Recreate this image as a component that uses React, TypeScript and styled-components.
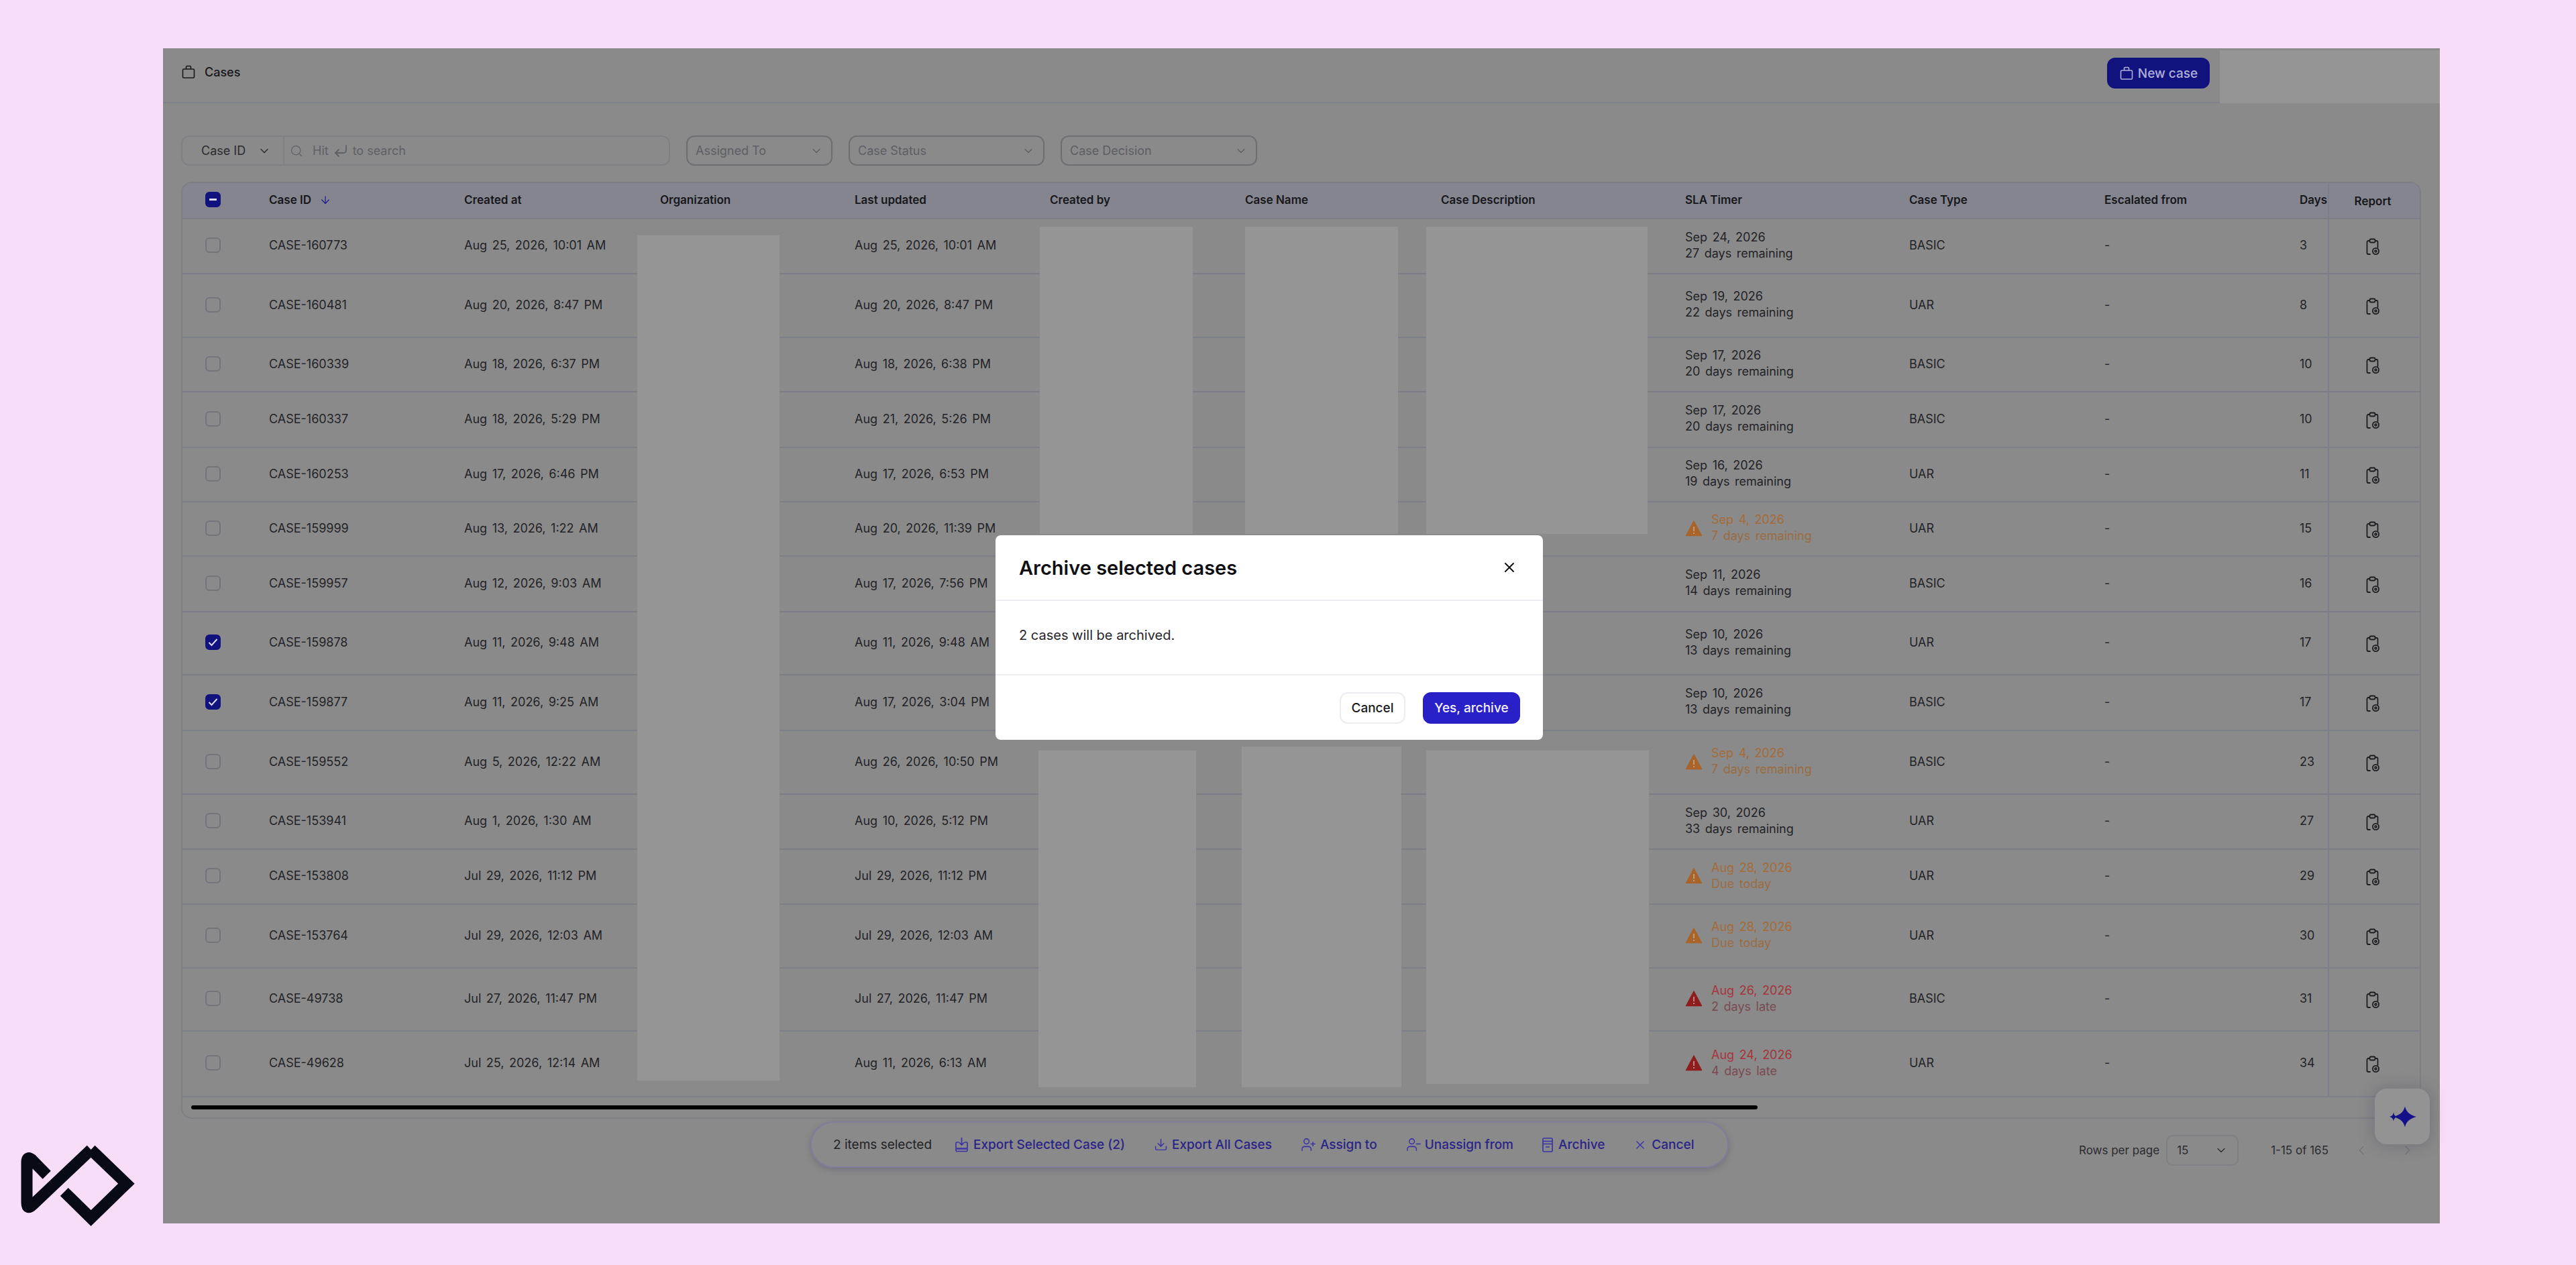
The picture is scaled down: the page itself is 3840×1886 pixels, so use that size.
import styled, { createGlobalStyle } from 'styled-components';
import {
	ArrowDown,
	ChevronDown,
	ChevronLeft,
	ChevronRight,
	CornerDownLeft,
	Download,
	Search,
	UserMinus,
	UserPlus,
	X,
} from 'lucide-react';

const GlobalStyle = createGlobalStyle`
	html, body {
		margin: 0;
		background: #f7ddf7;
	}
	* {
		box-sizing: border-box;
	}
	body {
		font-family: Inter, "Liberation Sans", sans-serif;
		color: #1c1c20;
	}
`;

const Page = styled.div`
	position: relative;
	width: 3840px;
	height: 1886px;
	padding: 72px 203px 62px 243px;
	overflow: hidden;
`;

const Logo = styled.svg`
	position: absolute;
	left: 20px;
	bottom: 51px;
	width: 190px;
	height: 140px;
`;

const Panel = styled.main`
	position: relative;
	width: 100%;
	height: 100%;
	background: #8a8a8a;
	display: flex;
	flex-direction: column;
`;

const TopBar = styled.header`
	height: 82px;
	padding: 14px 343px 0 27px;
	border-bottom: 2px solid #7f8189;
	display: flex;
	justify-content: space-between;
	align-items: flex-start;
`;

const PageTitle = styled.div`
	display: flex;
	align-items: center;
	gap: 13px;
	height: 42px;
	font-size: 18px;
	font-weight: 500;
	color: #17171a;
`;

const NewCaseButton = styled.button`
	width: 153px;
	height: 46px;
	border: 0;
	border-radius: 12px;
	background: #12127f;
	color: #aeaed8;
	font: 500 19px Inter, sans-serif;
	display: flex;
	align-items: center;
	justify-content: center;
	gap: 6px;
`;

const Filters = styled.div`
	display: flex;
	gap: 24px;
	height: 45px;
	margin: 48px 0 24px 27px;
`;

const SearchGroup = styled.div`
	width: 729px;
	border: 2px solid #7f8084;
	border-radius: 12px;
	display: flex;
	align-items: center;
`;

const FieldSelect = styled.div`
	width: 152px;
	height: 100%;
	padding: 0 18px 0 28px;
	border-right: 2px solid #7f8084;
	display: flex;
	align-items: center;
	justify-content: space-between;
	font-size: 18px;
	color: #2a2a2e;
`;

const SearchHint = styled.div`
	display: flex;
	align-items: center;
	gap: 6px;
	padding-left: 8px;
	font-size: 18px;
	color: #5f6066;

	svg:first-child {
		margin-right: 8px;
	}
`;

const FilterSelect = styled.div<{ $w: number }>`
	width: ${(p) => p.$w}px;
	padding: 0 12px;
	border: 2px solid #6e6f73;
	border-radius: 12px;
	display: flex;
	align-items: center;
	justify-content: space-between;
	font-size: 18px;
	color: #5d5e64;
`;

const Table = styled.section`
	position: relative;
	width: 3339px;
	height: 1397px;
	margin-left: 27px;
	border: 2px solid #7e7f85;
	border-radius: 16px;
	overflow: hidden;
`;

const Row = styled.div<{ $h: number; $head?: boolean }>`
	display: grid;
	grid-template-columns: 129px 291px 292px 290px 291px 291px 292px 364px 334px 291px 291px 42px 137px;
	height: ${(p) => p.$h}px;
	padding-bottom: 3px;
	align-items: center;
	border-bottom: 2px solid #7d7f88;
	background: ${(p) => (p.$head ? '#84858f' : 'transparent')};
	font-size: ${(p) => (p.$head ? 17 : 18)}px;
	font-weight: ${(p) => (p.$head ? 600 : 400)};
	word-spacing: ${(p) => (p.$head ? 0 : 2.5)}px;
	color: ${(p) => (p.$head ? '#17171b' : '#232327')};
`;

const CheckCell = styled.div`
	display: flex;
	padding-left: 34px;
`;

const CheckBox = styled.span<{ $on?: boolean }>`
	width: 23px;
	height: 23px;
	border-radius: 6px;
	border: 2px solid ${(p) => (p.$on ? '#12127f' : '#73747c')};
	background: ${(p) => (p.$on ? '#12127f' : 'transparent')};
	display: flex;
	align-items: center;
	justify-content: center;
	color: #d8d8ee;
`;

const SortLabel = styled.div`
	display: flex;
	align-items: center;
	gap: 12px;
	color: #17171b;
	svg {
		color: #1d1a8f;
	}
`;

const SlaCell = styled.div`
	display: flex;
	align-items: center;
	gap: 13px;
	line-height: 24px;
`;

const SlaDate = styled.div<{ $tone?: 'warn' | 'late' }>`
	color: ${(p) => (p.$tone === 'warn' ? '#a56c38' : p.$tone === 'late' ? '#a5353a' : '#232327')};
`;

const SlaNote = styled.div<{ $tone?: 'warn' | 'late' }>`
	color: ${(p) => (p.$tone === 'warn' ? '#9a6c42' : p.$tone === 'late' ? '#7a4a50' : '#232327')};
`;

const ReportCell = styled.div`
	align-self: stretch;
	padding-right: 5px;
	border-left: 2px solid #7d7f88;
	display: flex;
	align-items: center;
	justify-content: center;
	margin-bottom: -5px;
`;

const ScrollArea = styled.div`
	height: 32px;
	padding: 12px 0 0 13px;
`;

const ScrollThumb = styled.div`
	width: 2335px;
	height: 6px;
	border-radius: 3px;
	background: #000;
`;

const Redaction = styled.div<{ $x: number; $y: number; $w: number; $h: number }>`
	position: absolute;
	left: ${(p) => p.$x}px;
	top: ${(p) => p.$y}px;
	width: ${(p) => p.$w}px;
	height: ${(p) => p.$h}px;
	background: #959595;
`;

const Footer = styled.footer`
	flex: 1;
	display: flex;
	align-items: flex-start;
	padding: 4px 37px 0 965px;
`;

const ActionBar = styled.div`
	width: 1369px;
	height: 69px;
	padding: 0 32px;
	border: 2px solid #7f7c9c;
	border-radius: 35px;
	box-shadow: 0 3px 8px rgba(60, 60, 90, 0.3);
	display: flex;
	align-items: center;
	gap: 43px;
	font-size: 19px;
	font-weight: 500;
`;

const SelectedCount = styled.span`
	margin-right: -9px;
	color: #232327;
	font-weight: 400;
`;

const ActionLink = styled.span<{ $gap?: number }>`
	display: flex;
	align-items: center;
	gap: ${(p) => p.$gap ?? 7}px;
	color: #2a2488;

	svg {
		color: #3a33a8;
	}
`;

const Pagination = styled.div`
	margin: 20px 0 0 auto;
	display: flex;
	align-items: center;
	font-size: 17px;
	color: #2b2b2f;
`;

const RowsSelect = styled.div`
	width: 108px;
	height: 46px;
	margin: 0 48px 0 10px;
	padding: 0 14px;
	border: 2px solid #7f8084;
	border-radius: 10px;
	display: flex;
	align-items: center;
	justify-content: space-between;
`;

const PageArrows = styled.div`
	display: flex;
	gap: 47px;
	margin-left: 38px;
	color: #74757a;
`;

const AssistantButton = styled.button`
	position: absolute;
	right: 15px;
	bottom: 118px;
	width: 82px;
	height: 83px;
	padding: 0;
	border: 0;
	border-radius: 18px;
	background: #939393;
	box-shadow: 0 0 24px rgba(60, 60, 90, 0.32);
	display: flex;
	align-items: center;
	justify-content: center;
`;

const Modal = styled.div`
	position: absolute;
	left: 1241px;
	top: 726px;
	width: 816px;
	height: 305px;
	border-radius: 8px;
	background: #fff;
	display: flex;
	flex-direction: column;
`;

const ModalHead = styled.div`
	height: 98px;
	padding: 0 38px 0 35px;
	border-bottom: 2px solid #ececf3;
	display: flex;
	align-items: center;
	justify-content: space-between;
	font-size: 29px;
	font-weight: 600;
	color: #101014;
`;

const ModalBody = styled.div`
	height: 111px;
	padding: 0 35px 8px;
	border-bottom: 2px solid #ececf3;
	display: flex;
	align-items: center;
	font-size: 20px;
	color: #26262a;
`;

const ModalFoot = styled.div`
	flex: 1;
	padding-right: 34px;
	display: flex;
	align-items: center;
	justify-content: flex-end;
	gap: 26px;
`;

const ModalButton = styled.button<{ $primary?: boolean }>`
	height: 47px;
	width: ${(p) => (p.$primary ? 145 : 98)}px;
	border-radius: 12px;
	border: 2px solid ${(p) => (p.$primary ? '#2a20c8' : '#ececf3')};
	background: ${(p) => (p.$primary ? '#2a20c8' : '#fff')};
	color: ${(p) => (p.$primary ? '#f2f2ff' : '#1a1a1e')};
	font: 500 19px Inter, sans-serif;
`;

const CaseIcon = () => (
	<svg width="22" height="22" viewBox="0 0 22 22" fill="none" stroke="currentColor" strokeWidth="1.6">
		<rect x="2.5" y="7" width="17" height="13" rx="1.5" />
		<path d="M7.5 7V4A1.5 1.5 0 0 1 9 2.5h4A1.5 1.5 0 0 1 14.5 4v3" />
	</svg>
);

const ReportIcon = () => (
	<svg width="26" height="26" viewBox="0 0 26 26" fill="none" stroke="#1d1d21" strokeWidth="1.8" strokeLinecap="round">
		<rect x="8.5" y="1.5" width="8" height="5" rx="1.5" />
		<path d="M8 4H6.5A2 2 0 0 0 4.5 6v16a2 2 0 0 0 2 2H9" />
		<path d="M17 4h1.5a2 2 0 0 1 2 2v8" />
		<circle cx="17.5" cy="19.5" r="4.6" />
		<circle cx="17.5" cy="19.5" r="1.4" />
	</svg>
);

const AlertIcon = ({ tone }: { tone: 'warn' | 'late' }) => {
	const fill = tone === 'warn' ? '#a8642a' : '#8e1e1c';
	return (
		<svg width="26" height="25" viewBox="0 0 26 25">
			<path d="M13 2 24.5 23.5H1.5Z" fill={fill} stroke={fill} strokeWidth="1.5" strokeLinejoin="round" />
			<path d="M13 10v7M13 19v2" stroke={tone === 'warn' ? '#c39a6c' : '#c98080'} strokeWidth="2" />
		</svg>
	);
};

const ExportSelectedIcon = () => (
	<svg width="21" height="23" viewBox="0 0 21 23" fill="none" stroke="currentColor" strokeWidth="1.7">
		<path d="M10.5 1v11M6.5 8l4 4 4-4" />
		<path d="M6 8H3.5A1.5 1.5 0 0 0 2 9.500V20A1.500 1.500 0 0 0 3.500 21.500h14A1.500 1.500 0 0 0 19 20V9.500A1.500 1.500 0 0 0 17.500 8H15" />
		<path d="M3 17.500h15" strokeWidth="2.4" />
	</svg>
);

const ArchiveSlimIcon = () => (
	<svg width="16" height="22" viewBox="0 0 16 22" fill="none" stroke="currentColor" strokeWidth="1.7">
		<rect x="1" y="1" width="14" height="20" rx="1.5" />
		<path d="M1 5.500h14M1 9.500h14M5 14h6" />
	</svg>
);

type Tone = 'warn' | 'late';

type CaseRow = {
	h: number;
	id: string;
	created: string;
	updated: string;
	date: string;
	left: string;
	tone?: Tone;
	type: string;
	days: number;
	on?: boolean;
};

const rows: CaseRow[] = [
	{ h: 82, id: 'CASE-160773', created: 'Aug 25, 2026, 10:01 AM', updated: 'Aug 25, 2026, 10:01 AM', date: 'Sep 24, 2026', left: '27 days remaining', type: 'BASIC', days: 3 },
	{ h: 95, id: 'CASE-160481', created: 'Aug 20, 2026, 8:47 PM', updated: 'Aug 20, 2026, 8:47 PM', date: 'Sep 19, 2026', left: '22 days remaining', type: 'UAR', days: 8 },
	{ h: 81, id: 'CASE-160339', created: 'Aug 18, 2026, 6:37 PM', updated: 'Aug 18, 2026, 6:38 PM', date: 'Sep 17, 2026', left: '20 days remaining', type: 'BASIC', days: 10 },
	{ h: 83, id: 'CASE-160337', created: 'Aug 18, 2026, 5:29 PM', updated: 'Aug 21, 2026, 5:26 PM', date: 'Sep 17, 2026', left: '20 days remaining', type: 'BASIC', days: 10 },
	{ h: 81, id: 'CASE-160253', created: 'Aug 17, 2026, 6:46 PM', updated: 'Aug 17, 2026, 6:53 PM', date: 'Sep 16, 2026', left: '19 days remaining', type: 'UAR', days: 11 },
	{ h: 81, id: 'CASE-159999', created: 'Aug 13, 2026, 1:22 AM', updated: 'Aug 20, 2026, 11:39 PM', date: 'Sep 4, 2026', left: '7 days remaining', tone: 'warn', type: 'UAR', days: 15 },
	{ h: 83, id: 'CASE-159957', created: 'Aug 12, 2026, 9:03 AM', updated: 'Aug 17, 2026, 7:56 PM', date: 'Sep 11, 2026', left: '14 days remaining', type: 'BASIC', days: 16 },
	{ h: 94, id: 'CASE-159878', created: 'Aug 11, 2026, 9:48 AM', updated: 'Aug 11, 2026, 9:48 AM', date: 'Sep 10, 2026', left: '13 days remaining', type: 'UAR', days: 17, on: true },
	{ h: 83, id: 'CASE-159877', created: 'Aug 11, 2026, 9:25 AM', updated: 'Aug 17, 2026, 3:04 PM', date: 'Sep 10, 2026', left: '13 days remaining', type: 'BASIC', days: 17, on: true },
	{ h: 95, id: 'CASE-159552', created: 'Aug 5, 2026, 12:22 AM', updated: 'Aug 26, 2026, 10:50 PM', date: 'Sep 4, 2026', left: '7 days remaining', tone: 'warn', type: 'BASIC', days: 23 },
	{ h: 82, id: 'CASE-153941', created: 'Aug 1, 2026, 1:30 AM', updated: 'Aug 10, 2026, 5:12 PM', date: 'Sep 30, 2026', left: '33 days remaining', type: 'UAR', days: 27 },
	{ h: 82, id: 'CASE-153808', created: 'Jul 29, 2026, 11:12 PM', updated: 'Jul 29, 2026, 11:12 PM', date: 'Aug 28, 2026', left: 'Due today', tone: 'warn', type: 'UAR', days: 29 },
	{ h: 95, id: 'CASE-153764', created: 'Jul 29, 2026, 12:03 AM', updated: 'Jul 29, 2026, 12:03 AM', date: 'Aug 28, 2026', left: 'Due today', tone: 'warn', type: 'UAR', days: 30 },
	{ h: 94, id: 'CASE-49738', created: 'Jul 27, 2026, 11:47 PM', updated: 'Jul 27, 2026, 11:47 PM', date: 'Aug 26, 2026', left: '2 days late', tone: 'late', type: 'BASIC', days: 31 },
	{ h: 98, id: 'CASE-49628', created: 'Jul 25, 2026, 12:14 AM', updated: 'Aug 11, 2026, 6:13 AM', date: 'Aug 24, 2026', left: '4 days late', tone: 'late', type: 'UAR', days: 34 },
];

// blanked-out columns, coordinates inside the panel
const redactions = [
	{ x: 707, y: 279, w: 212, h: 1260 },
	{ x: 1307, y: 266, w: 228, h: 458 },
	{ x: 1613, y: 266, w: 228, h: 458 },
	{ x: 1883, y: 266, w: 330, h: 458 },
	{ x: 1305, y: 1047, w: 235, h: 502 },
	{ x: 1608, y: 1041, w: 238, h: 508 },
	{ x: 1883, y: 1047, w: 332, h: 497 },
	{ x: 3066, y: 3, w: 328, h: 79 },
];

const App = () => (
	<Page>
		<GlobalStyle />
		<Logo viewBox="0 0 190 140" fill="none" stroke="#070a14" strokeWidth="17">
			<path strokeLinejoin="round" d="M49.7 56.7 27 33.5Q20 28 20 38V98Q20 110 29 101L115.6 19" />
			<path strokeLinejoin="miter" d="M115.6 19 168.4 69.7 115.6 121 75.8 82" />
		</Logo>
		<Panel>
			<TopBar>
				<PageTitle>
					<CaseIcon />
					Cases
				</PageTitle>
				<NewCaseButton>
					<CaseIcon />
					New case
				</NewCaseButton>
			</TopBar>
			<Filters>
				<SearchGroup>
					<FieldSelect>
						Case ID
						<ChevronDown size={20} strokeWidth={1.5} />
					</FieldSelect>
					<SearchHint>
						<Search size={20} strokeWidth={1.5} />
						Hit
						<CornerDownLeft size={24} strokeWidth={1.8} />
						to search
					</SearchHint>
				</SearchGroup>
				<FilterSelect $w={218}>
					Assigned To
					<ChevronDown size={20} strokeWidth={1.5} />
				</FilterSelect>
				<FilterSelect $w={292}>
					Case Status
					<ChevronDown size={20} strokeWidth={1.5} />
				</FilterSelect>
				<FilterSelect $w={293}>
					Case Decision
					<ChevronDown size={20} strokeWidth={1.5} />
				</FilterSelect>
			</Filters>
			<Table>
				<Row $h={54} $head>
					<CheckCell>
						<CheckBox $on>
							<svg width="11" height="4" viewBox="0 0 11 4"><rect width="11" height="3" fill="currentColor" /></svg>
						</CheckBox>
					</CheckCell>
					<SortLabel>
						Case ID
						<ArrowDown size={18} strokeWidth={1.6} />
					</SortLabel>
					<div>Created at</div>
					<div>Organization</div>
					<div>Last updated</div>
					<div>Created by</div>
					<div>Case Name</div>
					<div>Case Description</div>
					<div>SLA Timer</div>
					<div>Case Type</div>
					<div>Escalated from</div>
					<div>Days</div>
					<ReportCell>Report</ReportCell>
				</Row>
				{rows.map((r) => (
					<Row key={r.id} $h={r.h}>
						<CheckCell>
							<CheckBox $on={r.on}>
								{r.on && (
									<svg width="15" height="13" viewBox="0 0 15 13" fill="none" stroke="currentColor" strokeWidth="2">
										<path d="M1.5 7 5.5 11 13.5 2" />
									</svg>
								)}
							</CheckBox>
						</CheckCell>
						<div>{r.id}</div>
						<div>{r.created}</div>
						<div />
						<div>{r.updated}</div>
						<div />
						<div />
						<div />
						<SlaCell>
							{r.tone && <AlertIcon tone={r.tone} />}
							<div>
								<SlaDate $tone={r.tone}>{r.date}</SlaDate>
								<SlaNote $tone={r.tone}>{r.left}</SlaNote>
							</div>
						</SlaCell>
						<div>{r.type}</div>
						<div>-</div>
						<div>{r.days}</div>
						<ReportCell>
							<ReportIcon />
						</ReportCell>
					</Row>
				))}
				<ScrollArea>
					<ScrollThumb />
				</ScrollArea>
			</Table>
			<Footer>
				<ActionBar>
					<SelectedCount>2 items selected</SelectedCount>
					<ActionLink>
						<ExportSelectedIcon />
						Export Selected Case (2)
					</ActionLink>
					<ActionLink $gap={6}>
						<Download size={21} strokeWidth={1.7} />
						Export All Cases
					</ActionLink>
					<ActionLink $gap={6}>
						<UserPlus size={23} strokeWidth={1.6} />
						Assign to
					</ActionLink>
					<ActionLink $gap={5}>
						<UserMinus size={23} strokeWidth={1.6} />
						Unassign from
					</ActionLink>
					<ActionLink $gap={8}>
						<ArchiveSlimIcon />
						Archive
					</ActionLink>
					<ActionLink>
						<X size={20} strokeWidth={1.7} />
						Cancel
					</ActionLink>
				</ActionBar>
				<Pagination>
					Rows per page
					<RowsSelect>
						15
						<ChevronDown size={20} strokeWidth={1.5} />
					</RowsSelect>
					1-15 of 165
					<PageArrows>
						<ChevronLeft size={22} strokeWidth={1.5} />
						<ChevronRight size={22} strokeWidth={1.5} />
					</PageArrows>
				</Pagination>
			</Footer>
			{redactions.map((b) => (
				<Redaction key={`${b.x}-${b.y}`} $x={b.x} $y={b.y} $w={b.w} $h={b.h} />
			))}
			<AssistantButton>
				<svg width="52" height="34" viewBox="0 0 52 34" fill="#15108a">
					<path d="M30 1.500C32 9 36 14 47 17 36 20 32 25 30 32.500 28 25 24 20 13 17 24 14 28 9 30 1.500Z" />
					<path d="M13 10C13.500 14 15 16 19 17 15 18 13.500 20 13 24 12.500 20 11 18 7 17 11 16 12.500 14 13 10Z" />
				</svg>
			</AssistantButton>
			<Modal>
				<ModalHead>
					Archive selected cases
					<X size={24} strokeWidth={2} />
				</ModalHead>
				<ModalBody>2 cases will be archived.</ModalBody>
				<ModalFoot>
					<ModalButton>Cancel</ModalButton>
					<ModalButton $primary>Yes, archive</ModalButton>
				</ModalFoot>
			</Modal>
		</Panel>
	</Page>
);

export default App;
